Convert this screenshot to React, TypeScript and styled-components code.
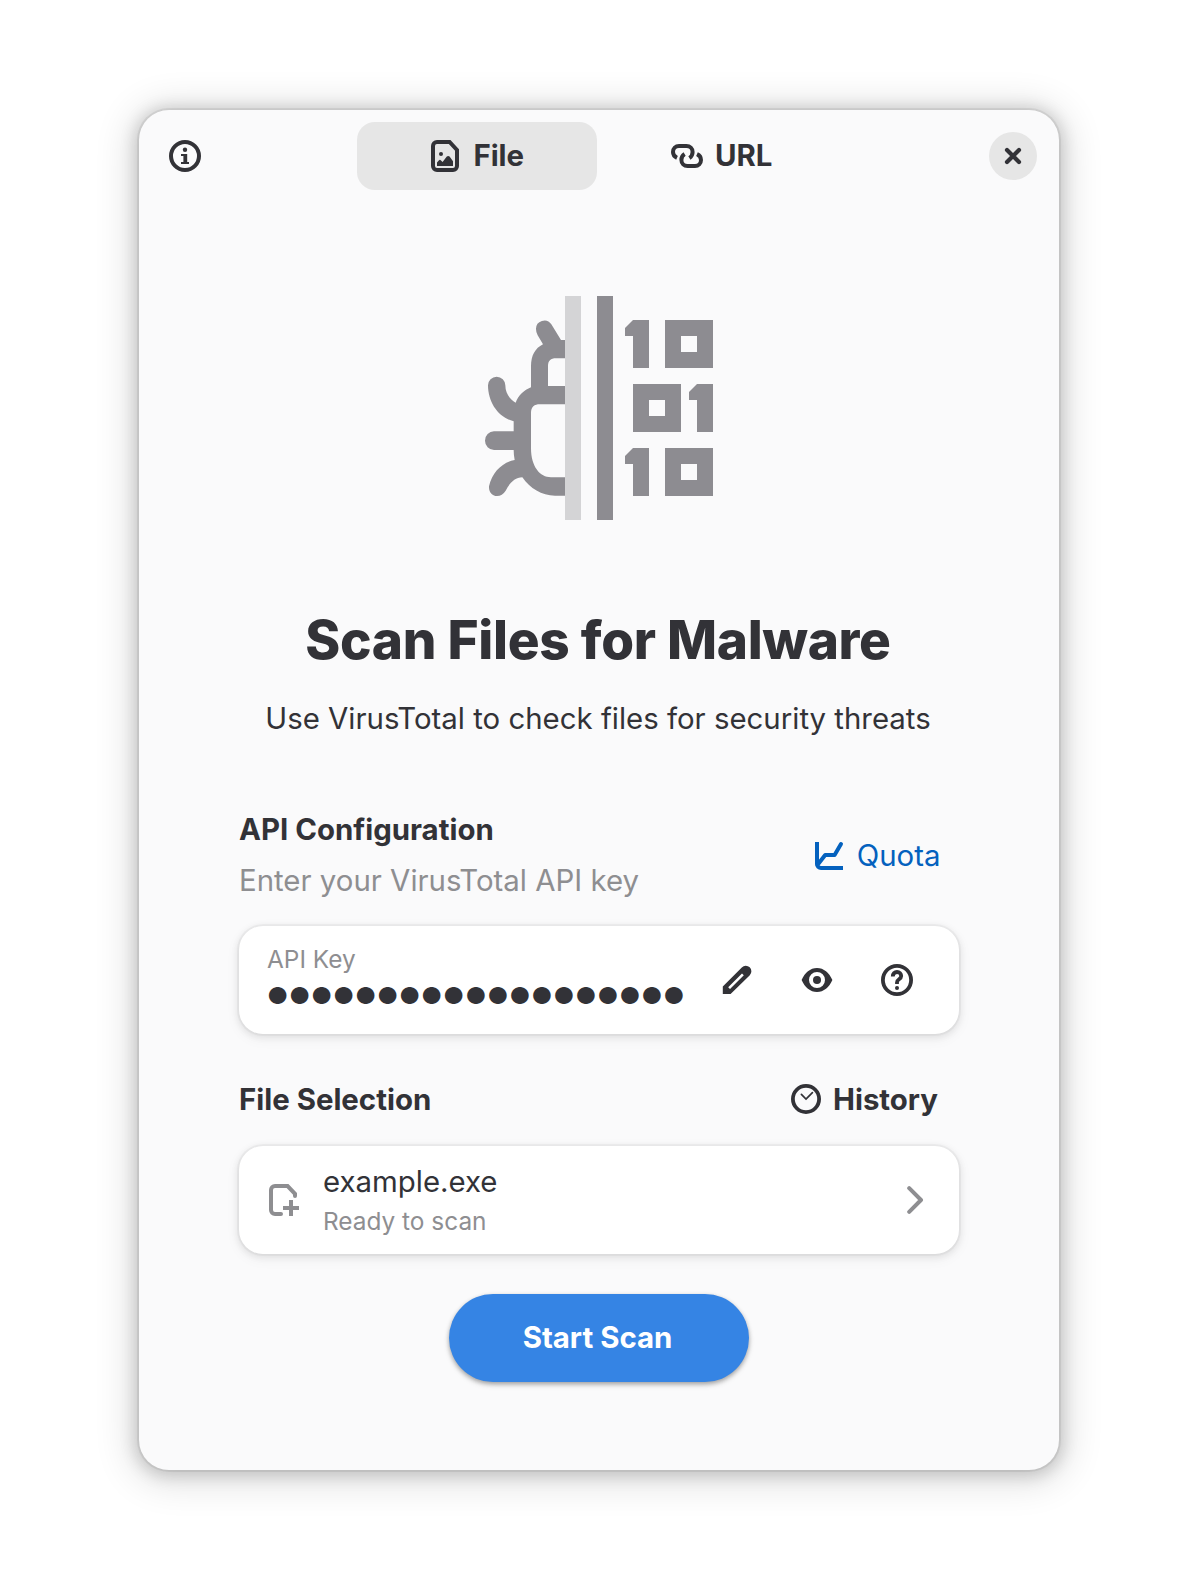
import React from "react";
import styled, { createGlobalStyle } from "styled-components";

const ink = "#323237";
const dim = "#8e8e91";
const accent = "#0461be";

const GlobalStyle = createGlobalStyle`
  * { box-sizing: border-box; }
  body {
    margin: 0;
    background: #fff;
    color: ${ink};
    font-family: Inter, "Noto Sans", sans-serif;
    font-size: 29.4px;
    line-height: 36px;
  }
  button { font: inherit; color: inherit; border: 0; background: none; padding: 0; margin: 0; }
  svg { display: block; flex: none; }
`;

const Desktop = styled.div`
  height: 1580px;
  padding: 110px 139px;
  overflow: hidden;
`;

const Window = styled.main`
  width: 920px;
  height: 1360px;
  border-radius: 30px;
  background: #fafafb;
  box-shadow:
    0 0 0 2px rgba(0, 0, 0, 0.06),
    0 2px 16px 4px rgba(0, 0, 0, 0.16),
    0 4px 36px 10px rgba(0, 0, 0, 0.12);
  display: flex;
  flex-direction: column;
  align-items: center;
`;

const Header = styled.header`
  width: 100%;
  height: 92px;
  padding: 0 22px 0 30px;
  display: grid;
  grid-template-columns: 188px 484px 1fr;
  align-items: center;
`;

const Tabs = styled.nav`
  display: flex;
  gap: 4px;
`;

const Tab = styled.button<{ $active?: boolean }>`
  width: 240px;
  height: 68px;
  padding: ${(p) => (p.$active ? "0 1px 0 0" : "0 0 0 1px")};
  border-radius: 18px;
  background: ${(p) => (p.$active ? "#e6e6e6" : "transparent")};
  font-weight: 700;
  display: flex;
  align-items: center;
  justify-content: center;
  gap: 12.5px;
`;

const CloseButton = styled.button`
  width: 48px;
  height: 48px;
  border-radius: 50%;
  background: #e6e6e6;
  display: flex;
  align-items: center;
  justify-content: center;
  justify-self: end;
`;

const Hero = styled.div`
  width: 250px;
  height: 245px;
  margin-top: 83px;
  margin-right: -2px;
`;

const Title = styled.h1`
  margin: 78px 2px 0 0;
  font-size: 53.1px;
  line-height: 64px;
  font-weight: 800;
  letter-spacing: -0.32px;
  white-space: nowrap;
`;

const Subtitle = styled.p`
  margin: 29px 2px 0 0;
  white-space: nowrap;
`;

const Content = styled.section`
  width: 720px;
  display: flex;
  flex-direction: column;
  align-items: center;
`;

const GroupHeader = styled.div<{ $top: number; $gap: number }>`
  width: 100%;
  margin-top: ${(p) => p.$top}px;
  margin-bottom: ${(p) => p.$gap}px;
  display: flex;
  align-items: center;
  justify-content: space-between;
`;

const GroupTitle = styled.h2`
  margin: 0;
  font-size: inherit;
  font-weight: 700;
`;

const GroupHint = styled.p`
  margin: 15px 0 0;
  color: ${dim};
`;

const FlatButton = styled.button<{ $link?: boolean }>`
  display: flex;
  align-items: center;
  gap: 12px;
  padding-right: ${(p) => (p.$link ? 18.5 : 21)}px;
  color: ${(p) => (p.$link ? accent : ink)};
  font-weight: ${(p) => (p.$link ? 400 : 700)};
`;

const Card = styled.div`
  width: 100%;
  height: 108px;
  border-radius: 24px;
  background: #fff;
  box-shadow:
    0 0 0 2px rgba(0, 0, 6, 0.03),
    0 2px 6px 2px rgba(0, 0, 6, 0.07),
    0 4px 12px 4px rgba(0, 0, 6, 0.03);
  display: flex;
  align-items: center;
`;

const KeyField = styled.div`
  flex: 1;
  padding-left: 28px;
  height: 108px;
  padding-top: 18px;
`;

const Caption = styled.div`
  font-size: 24.4px;
  line-height: 30px;
  color: ${dim};
`;

const Secret = styled.div`
  font-size: 23.3px;
  letter-spacing: 0.72px;
  line-height: 36px;
  margin-top: 4px;
  white-space: nowrap;
`;

const RowActions = styled.div`
  display: flex;
  gap: 48px;
  padding-right: 46px;
`;

const FileText = styled.div`
  flex: 1;
  padding: 0 0 1px 24px;
  display: flex;
  flex-direction: column;
  gap: 6px;
`;

const FileRow = styled(Card)`
  padding: 0 35px 0 28px;
`;

const StartButton = styled.button`
  width: 300px;
  height: 88px;
  margin-top: 40px;
  padding-right: 3px;
  border-radius: 44px;
  background: #3584e4;
  color: #fff;
  font-weight: 700;
  box-shadow: 0 2px 4px rgba(0, 0, 0, 0.28), 0 3px 6px rgba(0, 0, 0, 0.12);
`;

type IconProps = { children: React.ReactNode; color?: string };

const Icon = ({ children, color = "currentColor" }: IconProps) => (
  <svg width="32" height="32" viewBox="0 0 16 16" fill="none" stroke={color} strokeWidth="2">
    {children}
  </svg>
);

const InfoIcon = () => (
  <Icon>
    <circle cx="8" cy="8" r="7" />
    <circle cx="8" cy="4.9" r="1.1" fill="currentColor" stroke="none" />
    <path d="M6 7h3.1v4H10v1H6v-1h1.2V8H6z" fill="currentColor" stroke="none" />
  </Icon>
);

const ImageFileIcon = () => (
  <Icon>
    <path d="M4 1H10.3L14 5V13a2 2 0 0 1-2 2H4a2 2 0 0 1-2-2V3a2 2 0 0 1 2-2z" />
    <circle cx="6" cy="7" r="1" fill="currentColor" stroke="none" />
    <path d="M4 13v-1.7L5 10.1q.5-.4 1 .1l.8.8L8.9 8.3q.7-.7 1.4 0L12 10.6V13z" fill="currentColor" stroke="none" />
  </Icon>
);

const LinkIcon = () => (
  <Icon>
    <path d="M3 8.95C1.8 8.4 1 7.3 1 6c0-1.7 1.3-3 3-3h3.7c1.8 0 3.1 1.3 3.1 3 0 1.2-.5 2.3-1.6 3" />
    <path d="M13 7.05c1.2.55 2 1.65 2 2.95 0 1.7-1.3 3-3 3H8.3c-1.8 0-3.1-1.3-3.1-3 0-1.2.5-2.3 1.6-3" />
  </Icon>
);

const CloseIcon = () => (
  <Icon>
    <path d="M5 5l6 6M11 5l-6 6" strokeLinecap="round" strokeWidth="2.1" />
  </Icon>
);

const QuotaIcon = () => (
  <Icon>
    <path d="M2 1V12a2 2 0 0 0 2 2H15" />
    <path d="M2.3 12.4L6.1 7.5H10.8L14 2" strokeLinecap="round" strokeLinejoin="round" />
  </Icon>
);

const PencilIcon = () => (
  <Icon>
    <path
      d="M.9 15v-3.8L10.4 1.7a2.75 2.75 0 0 1 4 3.9L4.8 15zM3.6 11.6l.9.9 6.9-6.9-.9-.9z"
      fill="currentColor"
      fillRule="evenodd"
      stroke="none"
    />
  </Icon>
);

const EyeIcon = () => (
  <Icon>
    <path
      d="M.3 8C1.9 4.4 4.6 2 8 2s6.1 2.4 7.7 6C14.1 11.6 11.4 14 8 14S1.9 11.6.3 8zM8 4a4 4 0 1 0 0 8 4 4 0 0 0 0-8z"
      fill="currentColor"
      fillRule="evenodd"
      stroke="none"
    />
    <circle cx="8" cy="8" r="2" fill="currentColor" stroke="none" />
  </Icon>
);

const HelpIcon = () => (
  <Icon>
    <circle cx="8" cy="8" r="7.05" strokeWidth="1.9" />
    <path d="M5.9 6.2C5.9 4.8 6.8 4 8 4s2.1.8 2.1 2.05C10.1 7.7 8 7.6 8 9.2V10" strokeWidth="1.9" />
    <circle cx="8" cy="12" r="1" fill="currentColor" stroke="none" />
  </Icon>
);

const HistoryIcon = () => (
  <svg width="30" height="32" viewBox="0 0 15 16" fill="none" stroke="currentColor">
    <circle cx="7.5" cy="7.5" r="6.55" strokeWidth="1.9" />
    <path d="M5.2 5.2L7.5 7.5 10.7 4.3" strokeWidth=".85" strokeLinecap="round" />
  </svg>
);

const AddFileIcon = () => (
  <Icon color={dim}>
    <path d="M7 15H4a2 2 0 0 1-2-2V3a2 2 0 0 1 2-2h6.3L14 4.9V6" strokeLinecap="round" />
    <path d="M12 8v8M8 12h8" />
  </Icon>
);

const ChevronIcon = () => (
  <svg width="17" height="28" viewBox="0 0 17 28" fill="none" stroke={dim} strokeWidth="4">
    <path d="M2.2 2.2L14 14 2.2 25.8" strokeLinecap="round" strokeLinejoin="round" />
  </svg>
);

const One = ({ x, y }: { x: number; y: number }) => (
  <path d={`M${x} ${y + 24}l24-24h48v144h-48v-96h-24z`} />
);

const Zero = ({ x, y }: { x: number; y: number }) => (
  <path fillRule="evenodd" d={`M${x} ${y}h144v144h-144zM${x + 48} ${y + 48}v48h48v-48z`} />
);

const MalwareArt = () => (
  <svg width="250" height="245" viewBox="0 0 750 735" fill="#8d8c91">
    <path d="M270 165H258L229 118A25 25 0 0 0 183 132Q183 142 188 151L204 178C180 190 168 212 168 243V307C147 315 130 332 122 353C105 344 91 325 91 301A26 26 0 0 0 39 301C39 352 70 398 116 409V439H57A27 28 0 0 0 57 495H116C116 505 117 515 119 525C83 532 52 560 42 604C40 636 77 643 92 617C105 592 120 578 142 577C165 610 200 632 240 632H270V577H228C195 577 168 545 168 490V385C168 365 178 358 195 358H270V303H219V243C219 228 227 220 243 220H270Z" />
    <rect x="270" y="33" width="48" height="672" fill="#d4d4d6" />
    <rect x="366" y="33" width="48" height="672" />
    <One x={450} y={105} />
    <Zero x={570} y={105} />
    <Zero x={474} y={297} />
    <One x={642} y={297} />
    <One x={450} y={489} />
    <Zero x={570} y={489} />
  </svg>
);

export default function App() {
  return (
    <>
      <GlobalStyle />
      <Desktop>
        <Window>
          <Header>
            <InfoIcon />
            <Tabs>
              <Tab $active>
                <ImageFileIcon />
                File
              </Tab>
              <Tab>
                <LinkIcon />
                URL
              </Tab>
            </Tabs>
            <CloseButton aria-label="Close">
              <CloseIcon />
            </CloseButton>
          </Header>

          <Hero>
            <MalwareArt />
          </Hero>
          <Title>Scan Files for Malware</Title>
          <Subtitle>Use VirusTotal to check files for security threats</Subtitle>

          <Content>
            <GroupHeader $top={75} $gap={27}>
              <div>
                <GroupTitle>API Configuration</GroupTitle>
                <GroupHint>Enter your VirusTotal API key</GroupHint>
              </div>
              <FlatButton $link>
                <QuotaIcon />
                Quota
              </FlatButton>
            </GroupHeader>
            <Card>
              <KeyField>
                <Caption>API Key</Caption>
                <Secret>{"●".repeat(19)}</Secret>
              </KeyField>
              <RowActions>
                <PencilIcon />
                <EyeIcon />
                <HelpIcon />
              </RowActions>
            </Card>

            <GroupHeader $top={48} $gap={28}>
              <GroupTitle>File Selection</GroupTitle>
              <FlatButton>
                <HistoryIcon />
                History
              </FlatButton>
            </GroupHeader>
            <FileRow>
              <AddFileIcon />
              <FileText>
                <div>example.exe</div>
                <Caption>Ready to scan</Caption>
              </FileText>
              <ChevronIcon />
            </FileRow>

            <StartButton>Start Scan</StartButton>
          </Content>
        </Window>
      </Desktop>
    </>
  );
}
